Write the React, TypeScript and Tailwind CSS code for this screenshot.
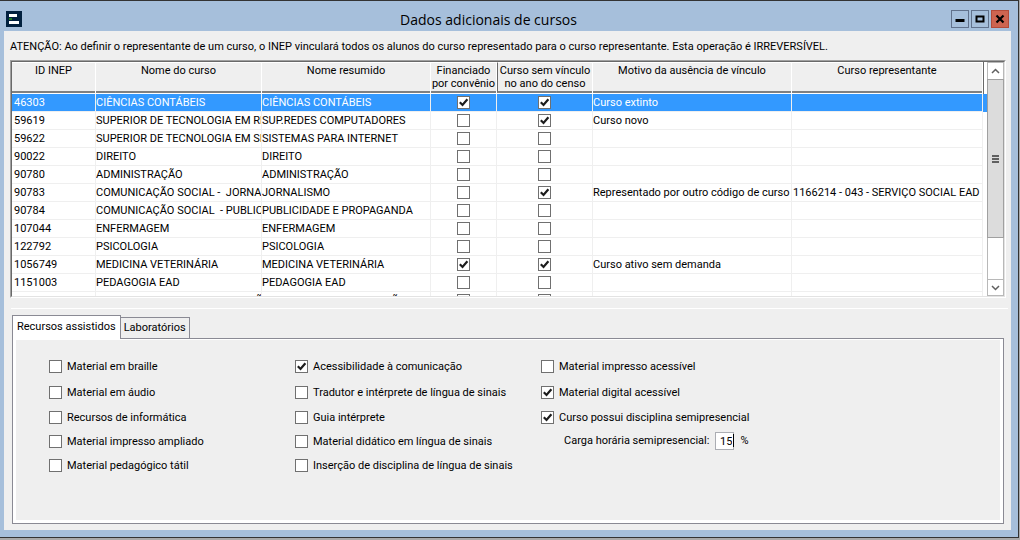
import { useState } from "react";
import type { ReactNode } from "react";

type Course = {
  id: string;
  name: string;
  short: string;
  funded?: boolean;
  unlinked?: boolean;
  reason?: string;
  representative?: string;
};

const courses: Course[] = [
  { id: "46303", name: "CIÊNCIAS CONTÁBEIS", short: "CIÊNCIAS CONTÁBEIS", funded: true, unlinked: true, reason: "Curso extinto" },
  { id: "59619", name: "SUPERIOR DE TECNOLOGIA EM REDES", short: "SUP.REDES COMPUTADORES", unlinked: true, reason: "Curso novo" },
  { id: "59622", name: "SUPERIOR DE TECNOLOGIA EM SISTEMAS", short: "SISTEMAS PARA INTERNET" },
  { id: "90022", name: "DIREITO", short: "DIREITO" },
  { id: "90780", name: "ADMINISTRAÇÃO", short: "ADMINISTRAÇÃO" },
  { id: "90783", name: "COMUNICAÇÃO SOCIAL -  JORNALISMO", short: "JORNALISMO", unlinked: true, reason: "Representado por outro código de curso", representative: "1166214 - 043 - SERVIÇO SOCIAL EAD" },
  { id: "90784", name: "COMUNICAÇÃO SOCIAL  - PUBLICIDADE", short: "PUBLICIDADE E PROPAGANDA" },
  { id: "107044", name: "ENFERMAGEM", short: "ENFERMAGEM" },
  { id: "122792", name: "PSICOLOGIA", short: "PSICOLOGIA" },
  { id: "1056749", name: "MEDICINA VETERINÁRIA", short: "MEDICINA VETERINÁRIA", funded: true, unlinked: true, reason: "Curso ativo sem demanda" },
  { id: "1151003", name: "PEDAGOGIA EAD", short: "PEDAGOGIA EAD" },
  { id: "1151004", name: "TECNOLOGIA EM ADMINISTRAÇÃO", short: "ENGENHARIA DE PRODUÇÃO" },
];

function CheckBox({ id, label, defaultChecked }: { id?: string; label?: string; defaultChecked?: boolean }) {
  return (
    <span className="relative block size-[13px] shrink-0">
      <input
        id={id}
        type="checkbox"
        aria-label={label}
        defaultChecked={defaultChecked}
        className="peer block size-[13px] appearance-none border border-[#707070] bg-white"
      />
      <svg viewBox="0 0 13 13" className="pointer-events-none absolute inset-0 hidden size-[13px] peer-checked:block">
        <path d="M2.8 6.3 5.5 9 10.4 3.2" fill="none" stroke="#1c1c1c" strokeWidth="2.2" />
      </svg>
    </span>
  );
}

function Option({ id, checked, children }: { id: string; checked?: boolean; children: ReactNode }) {
  return (
    <div className="flex items-center gap-[5px]">
      <CheckBox id={id} defaultChecked={checked} />
      <label htmlFor={id} className="pt-[2px] whitespace-nowrap">{children}</label>
    </div>
  );
}

const columns = [
  "ID INEP",
  "Nome do curso",
  "Nome resumido",
  "Financiado por convênio",
  "Curso sem vínculo no ano do censo",
  "Motivo da ausência de vínculo",
  "Curso representante",
];

function CourseTable() {
  const [selected, setSelected] = useState("46303");
  return (
    <div className="-mr-px border border-t-[#a0a0a0] border-r-white border-b-white border-l-[#a0a0a0]">
      <div className="flex h-[236px] border border-t-[#696969] border-r-[#e3e3e3] border-b-[#e3e3e3] border-l-[#696969] bg-white">
        <div className="min-w-0 flex-1 overflow-hidden">
          <table className="w-full table-fixed border-separate border-spacing-0">
            <colgroup>
              <col className="w-[84px]" />
              <col className="w-[166px]" />
              <col className="w-[169px]" />
              <col className="w-[66px]" />
              <col className="w-[96px]" />
              <col className="w-[199px]" />
              <col />
              <col className="w-[4px]" />
            </colgroup>
            <thead>
              <tr>
                {columns.map((title, i) => (
                  <th key={title} className="border-r border-b border-white p-0 align-top leading-[13px] font-normal">
                    <div
                      className={
                        "h-[31px] border-t border-b-2 border-t-white border-b-[#808080] bg-[#efefef] pt-px " +
                        (i === 4 ? "border-l border-l-[#696969]" : "")
                      }
                    >
                      {title}
                    </div>
                  </th>
                ))}
                <th aria-hidden="true" className="border-l border-l-[#696969] bg-white p-0" />
              </tr>
            </thead>
            <tbody>
              {courses.map((c) => {
                const active = c.id === selected;
                const cell = "h-[18px] overflow-hidden border-r border-b border-[#efefef] p-0 leading-[17px] whitespace-pre";
                return (
                  <tr key={c.id} onClick={() => setSelected(c.id)} className={active ? "bg-[#3399ff] text-white" : "bg-white"}>
                    <td className={cell + " pl-[2px]"}>{c.id}</td>
                    <td className={cell}>{c.name}</td>
                    <td className={cell}>{c.short}</td>
                    <td className={cell}>
                      <div className="flex justify-center">
                        <CheckBox label={"Financiado por convênio: " + c.name} defaultChecked={c.funded} />
                      </div>
                    </td>
                    <td className={cell}>
                      <div className="flex justify-center">
                        <CheckBox label={"Curso sem vínculo: " + c.name} defaultChecked={c.unlinked} />
                      </div>
                    </td>
                    <td className={cell}>{c.reason}</td>
                    <td className={cell + " pl-px"}>{c.representative}</td>
                    <td className="p-0" />
                  </tr>
                );
              })}
            </tbody>
          </table>
        </div>
        <div className="flex w-[17px] shrink-0 flex-col border border-[#b8b8b8] bg-white">
          <button aria-label="Rolar para cima" className="flex h-4 items-center justify-center">
            <svg viewBox="0 0 9 6" className="h-[6px] w-[9px]"><path d="M1 5 4.5 1.5 8 5" fill="none" stroke="#606060" strokeWidth="1.5" /></svg>
          </button>
          <div className="-mx-px flex h-[159px] flex-col items-center justify-center gap-px border border-[#a0a0a0] bg-[#dcdcdc]">
            <span className="h-[2px] w-[7px] bg-[#606060]" />
            <span className="h-[2px] w-[7px] bg-[#606060]" />
            <span className="h-[2px] w-[7px] bg-[#606060]" />
          </div>
          <div className="flex-1" />
          <button aria-label="Rolar para baixo" className="flex h-4 items-center justify-center border-t border-[#b8b8b8]">
            <svg viewBox="0 0 9 6" className="h-[6px] w-[9px]"><path d="M1 1 4.5 4.5 8 1" fill="none" stroke="#606060" strokeWidth="1.5" /></svg>
          </button>
        </div>
      </div>
    </div>
  );
}

export default function App() {
  return (
    <div className="flex min-h-screen flex-col bg-[#a9a9a9] pr-px pb-[2px] font-[family-name:'Roboto',sans-serif] text-[11px] text-black">
      <div className="flex flex-1 flex-col border-t border-r border-b border-[#333] bg-[#a6bfdb] pr-[7px] pb-[7px] pl-1">
        <header className="flex h-[30px] items-center pr-[2px] pl-[2px]">
          <svg viewBox="0 0 16 16" className="mt-[6px] size-4">
            <rect width="16" height="16" fill="#02213f" />
            <rect x="3" y="3" width="8" height="3" fill="#fff" />
            <rect x="3" y="7" width="3" height="2" fill="#1e7b1e" />
            <rect x="3" y="10" width="10" height="3" fill="#fff" />
          </svg>
          <h1 className="mt-2 flex-1 pl-1 text-center font-[family-name:'Open_Sans',sans-serif] text-[14px] leading-5">Dados adicionais de cursos</h1>
          <div className="mt-[6px] flex gap-[2px]">
            <button aria-label="Minimizar" className="flex size-[18px] items-center justify-center border border-[#62728c]">
              <svg viewBox="0 0 10 10" className="size-[10px]"><path d="M0.5 6.5h9" stroke="#000" strokeWidth="3" /></svg>
            </button>
            <button aria-label="Maximizar" className="flex size-[18px] items-center justify-center border border-[#62728c]">
              <svg viewBox="0 0 10 10" className="size-[10px]"><path d="M1.5 2.5h7v5h-7z" fill="none" stroke="#000" strokeWidth="2" /></svg>
            </button>
            <button aria-label="Fechar" className="flex size-[18px] items-center justify-center border border-[#b34a38] bg-[#cd6450]">
              <svg viewBox="0 0 10 10" className="size-[10px]"><path d="M1.5 1.5l7 7M8.5 1.5l-7 7" stroke="#000" strokeWidth="2.2" /></svg>
            </button>
          </div>
        </header>

        <main className="flex flex-1 flex-col bg-[#efefef] px-[6px] pb-[6px]">
          <p className="pt-[9px] pb-[6px] leading-[14px] whitespace-nowrap">
            ATENÇÃO: Ao definir o representante de um curso, o INEP vinculará todos os alunos do curso representado para o curso representante. Esta operação é IRREVERSÍVEL.
          </p>
          <CourseTable />
          <hr className="mt-[10px] -mr-[3px] ml-px border-white" />

          <div role="tablist" className="mt-[6px] flex items-end pl-[2px]">
            <button role="tab" aria-selected="true" className="z-10 -mb-px h-6 border border-b-0 border-[#8a8a94] bg-white px-1 whitespace-nowrap">
              Recursos assistidos
            </button>
            <button role="tab" aria-selected="false" className="h-[21px] border border-b-0 border-l-0 border-[#8a8a94] px-[3px] whitespace-nowrap">
              Laboratórios
            </button>
          </div>
          <section role="tabpanel" className="mr-px ml-[2px] flex flex-1 border border-[#8a8a94] bg-white p-[3px] pt-px">
            <div className="grid flex-1 grid-cols-[246px_246px_1fr] grid-rows-[26px_26px_24px_24px_24px] bg-[#efefef] pt-[13px] pl-[33px]">
              <Option id="braille">Material em braille</Option>
              <Option id="comunicacao" checked>Acessibilidade à comunicação</Option>
              <Option id="impresso">Material impresso acessível</Option>
              <Option id="audio">Material em áudio</Option>
              <Option id="tradutor">Tradutor e intérprete de língua de sinais</Option>
              <Option id="digital" checked>Material digital acessível</Option>
              <Option id="informatica">Recursos de informática</Option>
              <Option id="guia">Guia intérprete</Option>
              <Option id="semipresencial" checked>Curso possui disciplina semipresencial</Option>
              <Option id="ampliado">Material impresso ampliado</Option>
              <Option id="didatico">Material didático em língua de sinais</Option>
              <div className="flex items-center pl-[23px]">
                <label htmlFor="carga" className="whitespace-nowrap">Carga horária semipresencial:</label>
                <span className="relative mr-[6px] ml-[6px] block">
                  <input id="carga" defaultValue="15" className="block h-[18px] w-[19px] border border-[#abadb3] bg-white pr-px text-right outline-none" />
                  <span className="absolute top-[2px] right-0 h-[13px] w-px bg-black" />
                </span>
                <span>%</span>
              </div>
              <Option id="tatil">Material pedagógico tátil</Option>
              <Option id="insercao">Inserção de disciplina de língua de sinais</Option>
            </div>
          </section>
        </main>
      </div>
    </div>
  );
}
